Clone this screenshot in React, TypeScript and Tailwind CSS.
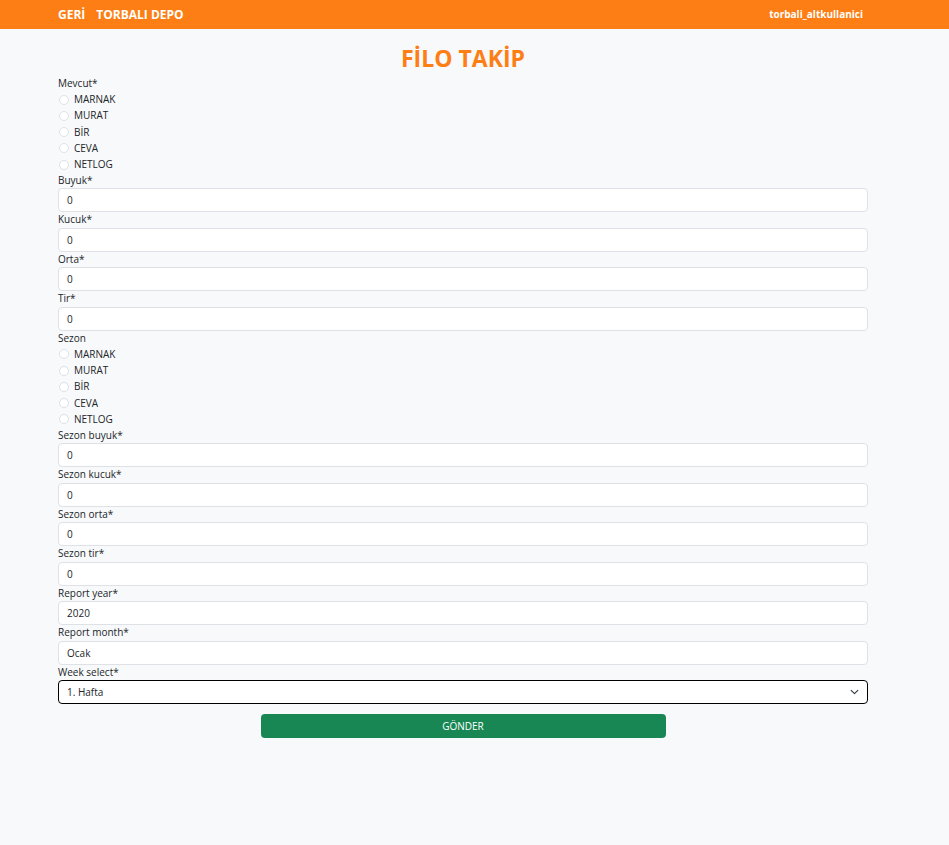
import React, { useState } from "react";

const companies = ["MARNAK", "MURAT", "BİR", "CEVA", "NETLOG"];

function Label({ text }: { text: string }) {
  return <div className="h-[15.5px] leading-[15.5px] text-[10px] text-[#212529]">{text}</div>;
}

function Field({ label, value }: { label: string; value: string }) {
  return (
    <div>
      <Label text={label} />
      <input
        readOnly
        value={value}
        className="block h-[24px] w-full rounded-[4px] border border-[#dee2e6] bg-white px-[8px] text-[10px] text-[#212529] outline-none"
      />
    </div>
  );
}

function RadioGroup({ label, name }: { label: string; name: string }) {
  const [sel, setSel] = useState("");
  return (
    <div>
      <Label text={label} />
      {companies.map((c) => (
        <label key={c} className="flex h-[16.25px] items-center gap-[5px] text-[10px] text-[#212529]">
          <span
            onClick={() => setSel(c)}
            className={`ml-[1px] inline-block h-[10px] w-[10px] rounded-full border ${
              sel === c ? "border-[#0d6efd] bg-[#0d6efd]" : "border-[#dee2e6] bg-white"
            }`}
          />
          <span>{c}</span>
          <input type="radio" name={name} className="hidden" />
        </label>
      ))}
    </div>
  );
}

export default function App() {
  return (
    <div className="min-h-[845px] bg-[#f8f9fa] font-['Open_Sans','Noto_Sans',sans-serif]">
      {/* Header */}
      <div className="flex h-[29px] items-center justify-between bg-[#fd7e14] pl-[58px] pr-[86px] text-white">
        <div className="flex gap-[11px] text-[12px] font-bold">
          <span>GERİ</span>
          <span>TORBALI DEPO</span>
        </div>
        <span className="text-[10px] font-bold">torbali_altkullanici</span>
      </div>

      <div className="ml-[58px] w-[810px]">
        <h1 className="mb-[2px] mt-[13px] h-[32px] text-center text-[23px] font-bold leading-[32px] text-[#fd7e14]">
          FİLO TAKİP
        </h1>

        <RadioGroup label="Mevcut*" name="mevcut" />
        <Field label="Buyuk*" value="0" />
        <Field label="Kucuk*" value="0" />
        <Field label="Orta*" value="0" />
        <Field label="Tir*" value="0" />

        <RadioGroup label="Sezon" name="sezon" />
        <Field label="Sezon buyuk*" value="0" />
        <Field label="Sezon kucuk*" value="0" />
        <Field label="Sezon orta*" value="0" />
        <Field label="Sezon tir*" value="0" />
        <Field label="Report year*" value="2020" />
        <Field label="Report month*" value="Ocak" />

        <div>
          <Label text="Week select*" />
          <div className="relative flex h-[24px] items-center rounded-[4px] border-[1.5px] border-black bg-white px-[8px] text-[10px] text-[#212529]">
            <span>1. Hafta</span>
            <svg
              className="absolute right-[8px] top-1/2 -translate-y-1/2"
              width="9"
              height="9"
              viewBox="0 0 16 16"
              fill="none"
              stroke="#343a40"
              strokeWidth="2"
              strokeLinecap="round"
              strokeLinejoin="round"
            >
              <path d="M2 5l6 6 6-6" />
            </svg>
          </div>
        </div>

        <div className="mt-[10px] flex justify-center">
          <button className="h-[24px] w-[405px] rounded-[4px] bg-[#198754] text-[10px] text-white">
            GÖNDER
          </button>
        </div>
      </div>
    </div>
  );
}
